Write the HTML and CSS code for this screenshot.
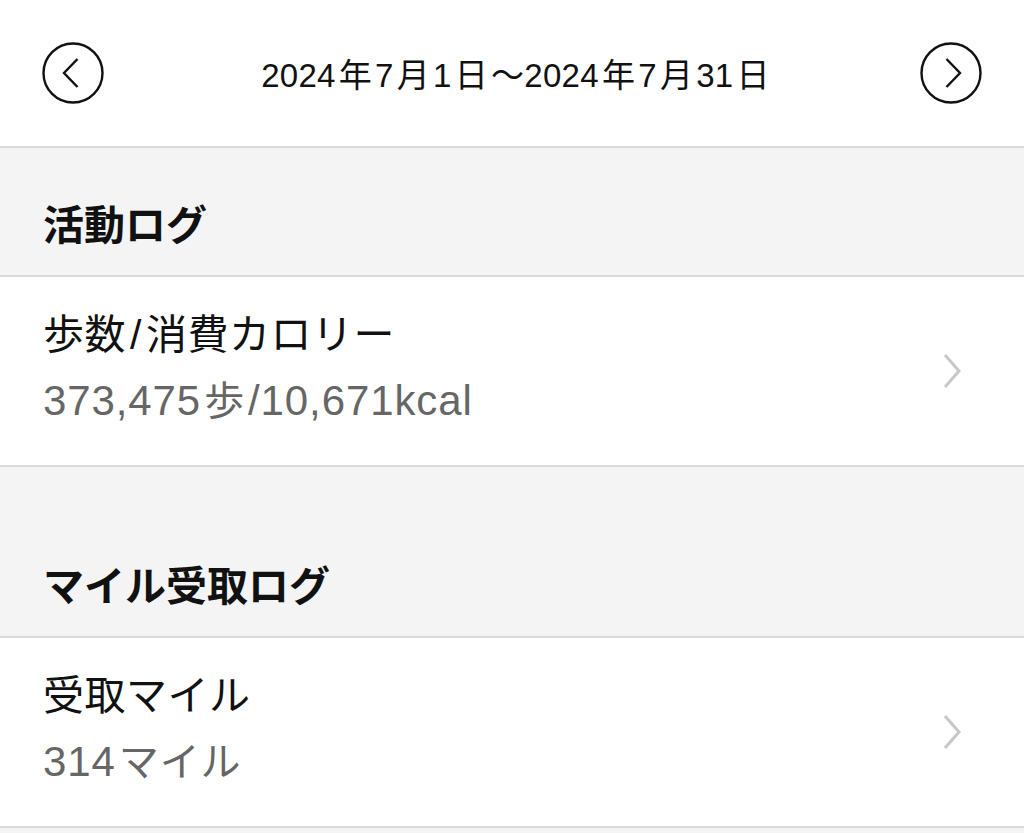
FILE: index.html
```html
<!DOCTYPE html>
<html lang="ja">
<head>
  <meta charset="UTF-8" />
  <meta name="viewport" content="width=device-width, initial-scale=1.0"/>
  <title>ログ</title>
  <link rel="stylesheet" href="styles.css">
</head>
<body>
  <div class="period-bar">
    <button class="period-btn" aria-label="前の期間">
      <svg viewBox="0 0 62 62" width="62" height="62">
        <circle cx="31" cy="31" r="29.5" fill="none" stroke="#111" stroke-width="2.4"/>
        <path d="M35.5 17 L22 31 L35.5 45" fill="none" stroke="#111" stroke-width="2.4"/>
      </svg>
    </button>
    <div class="period-text">2024<span class="cj">年</span>7<span class="cj">月</span>1<span class="cj">日</span>〜2024<span class="cj">年</span>7<span class="cj">月</span>31<span class="cj">日</span></div>
    <button class="period-btn" aria-label="次の期間">
      <svg viewBox="0 0 62 62" width="62" height="62">
        <circle cx="31" cy="31" r="29.5" fill="none" stroke="#111" stroke-width="2.4"/>
        <path d="M26.5 17 L40 31 L26.5 45" fill="none" stroke="#111" stroke-width="2.4"/>
      </svg>
    </button>
  </div>

  <div class="section-title first">活動ログ</div>
  <div class="log-row">
    <div class="log-text">
      <div class="log-label">歩数<span class="slash">/</span>消費カロリー</div>
      <div class="log-value">373,475<span class="cj">歩</span>/10,671kcal</div>
    </div>
    <svg class="chevron" viewBox="0 0 20 36" width="20" height="36">
      <path d="M3 2 L17 18 L3 34" fill="none" stroke="#c8c8cc" stroke-width="3"/>
    </svg>
  </div>

  <div class="section-title">マイル受取ログ</div>
  <div class="log-row">
    <div class="log-text">
      <div class="log-label">受取マイル</div>
      <div class="log-value">314<span class="cj">マイル</span></div>
    </div>
    <svg class="chevron" viewBox="0 0 20 36" width="20" height="36">
      <path d="M3 2 L17 18 L3 34" fill="none" stroke="#c8c8cc" stroke-width="3"/>
    </svg>
  </div>
</body>
</html>
```

FILE: styles.css
```css
:root {
  --bg: #f4f4f4;
  --card: #ffffff;
  --border: #dadada;
  --text: #111111;
  --sub-text: #666666;
}

body {
  margin: 0;
  font-family: "Liberation Sans", "Noto Sans CJK JP", sans-serif;
  background: var(--bg);
  color: var(--text);
}

.cj {
  margin: 0 3px;
}

.period-bar {
  height: 146px;
  background: var(--card);
  border-bottom: 2px solid var(--border);
  display: flex;
  align-items: center;
  justify-content: space-between;
  padding: 0 42px;
}

.period-btn {
  width: 62px;
  height: 62px;
  padding: 0;
  border: none;
  background: none;
  display: flex;
}

.period-text {
  font-size: 33px;
  letter-spacing: 0.3px;
  margin-left: 10px;
}

.section-title {
  padding: 95px 43px 24px;
  line-height: 50px;
  font-size: 41px;
  font-weight: bold;
  border-bottom: 2px solid var(--border);
}

.section-title.first {
  padding-top: 53px;
}

.log-row {
  background: var(--card);
  border-bottom: 2px solid var(--border);
  padding: 26px 62px 31px 43px;
  display: flex;
  align-items: center;
  justify-content: space-between;
}

.log-text {
  line-height: 65px;
  font-size: 41px;
}

.log-label {
  letter-spacing: 0.5px;
}

.slash {
  margin: 0 4px;
}

.log-value {
  color: var(--sub-text);
  font-size: 42px;
  letter-spacing: 0.9px;
}

.log-value .cj {
  font-size: 40px;
}

.chevron {
  display: block;
  margin-top: 4px;
}
```
